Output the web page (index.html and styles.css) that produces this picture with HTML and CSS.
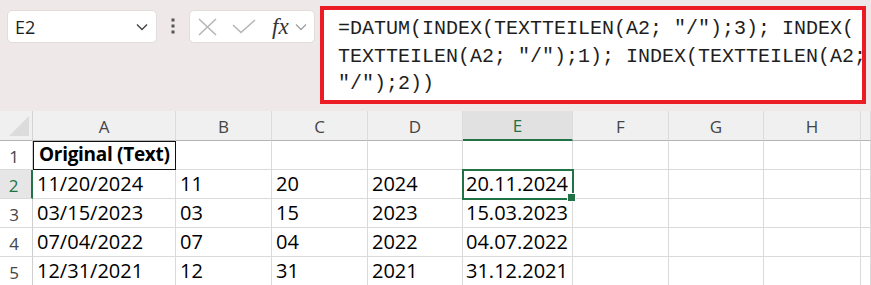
FILE: index.html
```html
<!DOCTYPE html>
<html lang="de">

<head>
    <meta charset="UTF-8">
    <title>TEXTTEILEN Datum</title>
    <link rel="stylesheet" href="styles.css">
</head>

<body>
    <div class="topbar">
        <div class="namebox">
            <span class="ref">E2</span>
            <svg class="chev" width="12" height="8" viewBox="0 0 12 8">
                <path d="M1 1.5 L6 6.5 L11 1.5" fill="none" stroke="#444" stroke-width="1.4" />
            </svg>
        </div>
        <div class="dots">
            <svg width="4" height="16" viewBox="0 0 4 16">
                <rect x="0.5" y="0.5" width="3" height="3" fill="#555" />
                <rect x="0.5" y="6.5" width="3" height="3" fill="#555" />
                <rect x="0.5" y="12.5" width="3" height="3" fill="#555" />
            </svg>
        </div>
        <div class="fxbox">
            <svg class="cancel" width="19" height="18" viewBox="0 0 19 18">
                <path d="M1 1 L18 17 M18 1 L1 17" stroke="#b4b4b4" stroke-width="1.5" fill="none" />
            </svg>
            <svg class="enter" width="24" height="15" viewBox="0 0 24 15">
                <path d="M1 6 L9 13.5 L23 1" stroke="#b4b4b4" stroke-width="1.5" fill="none" />
            </svg>
            <span class="fx">fx</span>
            <svg class="chev-sm" width="12" height="8" viewBox="0 0 12 8">
                <path d="M1 1.5 L6 6.5 L11 1.5" fill="none" stroke="#a0a0a0" stroke-width="1.3" />
            </svg>
        </div>
        <div class="formula">
            <div class="fline">=DATUM(INDEX(TEXTTEILEN(A2; "/");3); INDEX(</div>
            <div class="fline">TEXTTEILEN(A2; "/");1); INDEX(TEXTTEILEN(A2;</div>
            <div class="fline">"/");2))</div>
        </div>
    </div>

    <div class="sheet">
        <div class="hd corner"></div>
        <div class="hd">A</div>
        <div class="hd">B</div>
        <div class="hd">C</div>
        <div class="hd">D</div>
        <div class="hd sel-col">E</div>
        <div class="hd">F</div>
        <div class="hd">G</div>
        <div class="hd">H</div>
        <div class="hd"></div>

        <div class="rh">1</div>
        <div class="c b boxed">Original (Text)</div>
        <div class="c"></div>
        <div class="c"></div>
        <div class="c"></div>
        <div class="c"></div>
        <div class="c"></div>
        <div class="c"></div>
        <div class="c"></div>
        <div class="c"></div>

        <div class="rh sel-row">2</div>
        <div class="c">11/20/2024</div>
        <div class="c">11</div>
        <div class="c">20</div>
        <div class="c">2024</div>
        <div class="c r active">20.11.2024</div>
        <div class="c"></div>
        <div class="c"></div>
        <div class="c"></div>
        <div class="c"></div>

        <div class="rh">3</div>
        <div class="c">03/15/2023</div>
        <div class="c">03</div>
        <div class="c">15</div>
        <div class="c">2023</div>
        <div class="c r">15.03.2023</div>
        <div class="c"></div>
        <div class="c"></div>
        <div class="c"></div>
        <div class="c"></div>

        <div class="rh">4</div>
        <div class="c">07/04/2022</div>
        <div class="c">07</div>
        <div class="c">04</div>
        <div class="c">2022</div>
        <div class="c r">04.07.2022</div>
        <div class="c"></div>
        <div class="c"></div>
        <div class="c"></div>
        <div class="c"></div>

        <div class="rh">5</div>
        <div class="c">12/31/2021</div>
        <div class="c">12</div>
        <div class="c">31</div>
        <div class="c">2021</div>
        <div class="c r">31.12.2021</div>
        <div class="c"></div>
        <div class="c"></div>
        <div class="c"></div>
        <div class="c"></div>
    </div>
</body>

</html>
```

FILE: styles.css
```css
* {
    margin: 0;
    padding: 0;
    box-sizing: border-box;
}

body {
    width: 871px;
    height: 285px;
    overflow: hidden;
    background-color: #fff;
    font-family: "Open Sans", Arial, sans-serif;
}

/* formula bar */
.topbar {
    display: flex;
    align-items: flex-start;
    height: 111px;
    padding-left: 7px;
    background-color: #eee9e8;
}

.namebox {
    display: flex;
    align-items: center;
    justify-content: space-between;
    margin-top: 10px;
    width: 150px;
    height: 33px;
    padding: 0 8px 0 7px;
    background-color: #fff;
    border: 1px solid #e2dddc;
    border-radius: 5px;
}

.ref {
    font-size: 18px;
    color: #1f1f1f;
}

.dots {
    display: flex;
    justify-content: center;
    width: 32px;
    padding-top: 18px;
}

.fxbox {
    display: flex;
    align-items: center;
    margin-top: 10px;
    width: 126px;
    height: 33px;
    padding-left: 8px;
    background-color: #fff;
    border: 1px solid #e2dddc;
    border-radius: 5px;
}

.enter {
    margin-left: 15px;
}

.fx {
    margin-left: 16px;
    font-family: "Liberation Serif", "DejaVu Serif", serif;
    font-style: italic;
    font-size: 23px;
    color: #333;
    line-height: 1;
}

.chev-sm {
    margin-left: 6px;
}

.formula {
    margin-left: 5px;
    margin-top: 6px;
    width: 546px;
    height: 98px;
    padding: 5px 0 0 14px;
    background-color: #fff;
    border: 4px solid #ec1c24;
    font-family: "Liberation Mono", "DejaVu Sans Mono", monospace;
    font-size: 20px;
    line-height: 27.5px;
    color: #1e1e1e;
}

.fline {
    white-space: nowrap;
}

/* sheet */
.sheet {
    display: grid;
    grid-template-columns: 33px 143px 96px 96px 95px 110px 96px 95px 97px 1fr;
    grid-template-rows: 30px;
    grid-auto-rows: 29px;
}

.hd {
    display: flex;
    align-items: center;
    justify-content: center;
    padding-top: 1px;
    background-color: #f0f0f0;
    border-right: 1px solid #dcdcdc;
    border-bottom: 1px solid #b4b4b4;
    font-size: 17px;
    color: #454545;
}

.corner {
    position: relative;
    border-right-color: #d4d4d4;
}

.corner::after {
    content: "";
    position: absolute;
    right: 3px;
    bottom: 4px;
    width: 0;
    height: 0;
    border-left: 20px solid transparent;
    border-bottom: 20px solid #dcdcdc;
}

.sel-col {
    background-color: #e1e1e1;
    border-bottom: 2px solid #217346;
    color: #217346;
}

.rh {
    display: flex;
    align-items: center;
    justify-content: center;
    padding: 2px 4px 0 0;
    background-color: #fff;
    border-right: 1px solid #cfcfcf;
    border-bottom: 1px solid #dadada;
    font-size: 17px;
    color: #454545;
}

.sel-row {
    background-color: #e6e6e6;
    border-right: 2px solid #217346;
    color: #217346;
}

.c {
    display: flex;
    align-items: flex-end;
    padding: 0 4px 1px 4px;
    border-right: 1px solid #dadada;
    border-bottom: 1px solid #dadada;
    font-size: 20px;
    line-height: 27px;
    color: #000;
    white-space: nowrap;
}

.r {
    justify-content: flex-end;
}

.b {
    font-weight: bold;
    font-size: 19px;
    letter-spacing: -0.3px;
    padding-left: 6px;
}

.boxed {
    outline: 1px solid #111;
    outline-offset: -1px;
}

.active {
    position: relative;
    z-index: 1;
    outline: 2px solid #217346;
    outline-offset: -1px;
}

.active::after {
    content: "";
    position: absolute;
    right: -4px;
    bottom: -4px;
    width: 7px;
    height: 7px;
    background-color: #217346;
    border: 1px solid #fff;
}
```
